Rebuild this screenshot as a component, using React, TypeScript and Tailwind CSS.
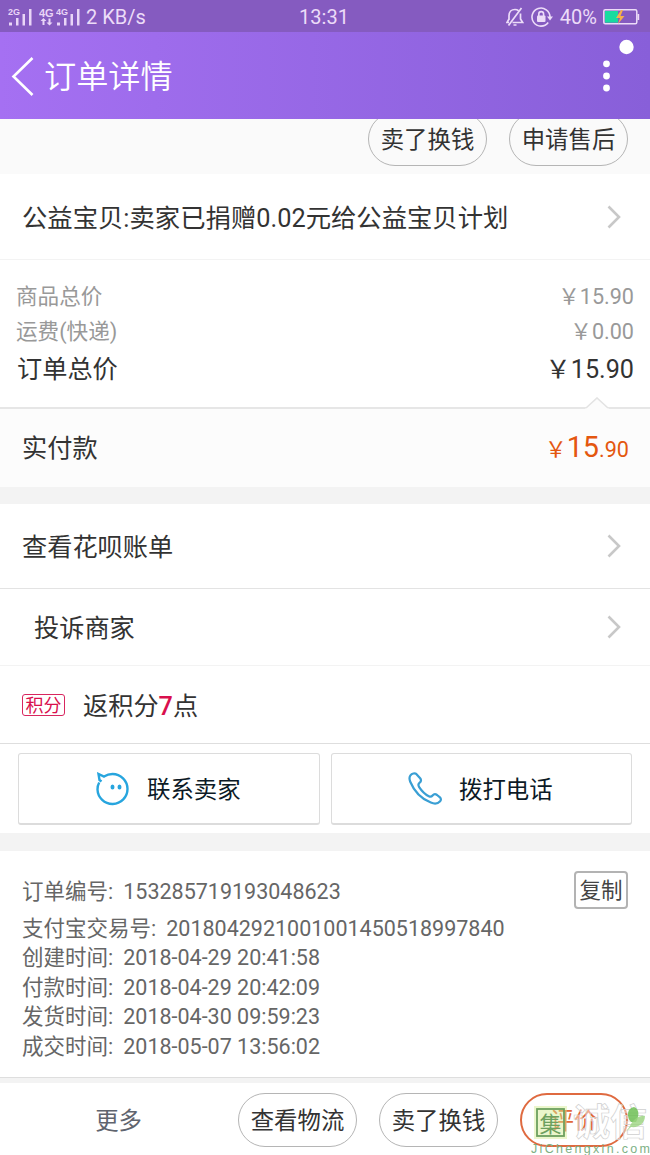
import type { ReactNode } from "react";

const totals = [
  { label: "商品总价", value: "￥15.90" },
  { label: "运费(快递)", value: "￥0.00" },
];

const times = [
  { label: "支付宝交易号:", value: "2018042921001001450518997840" },
  { label: "创建时间:", value: "2018-04-29 20:41:58" },
  { label: "付款时间:", value: "2018-04-29 20:42:09" },
  { label: "发货时间:", value: "2018-04-30 09:59:23" },
  { label: "成交时间:", value: "2018-05-07 13:56:02" },
];

function Signal({ label }: { label: string }) {
  return (
    <svg width="24" height="20" viewBox="0 0 24 20" fill="#e9d5f7">
      <text x="0" y="8" fontSize="9" fontWeight="700" fontFamily="Liberation Sans, sans-serif">
        {label}
      </text>
      <rect x="1" y="15.500" width="3" height="3" />
      <rect x="8" y="11" width="2.500" height="7.500" />
      <rect x="14.500" y="7" width="2.500" height="11.500" />
      <rect x="21" y="2" width="2.500" height="16.500" />
    </svg>
  );
}

function StatusBar() {
  return (
    <div className="grid h-8 grid-cols-[1fr_auto_1fr] items-center bg-[#855bc0] pl-2 pr-[10px] text-[20px] leading-8 text-[#ecdcf8]">
      <div className="flex items-center">
        <Signal label="2G" />
        <svg className="ml-[7px]" width="17" height="20" viewBox="0 0 17 20" fill="#e9d5f7">
          <text x="0" y="9.500" fontSize="11" fontWeight="700" fontFamily="Liberation Sans, sans-serif">
            4G
          </text>
          <path d="M4.500 11l3 3h-2v4h-2v-4h-2zM10.500 18.500l-3-3h2v-4h2v4h2z" />
        </svg>
        <Signal label="4G" />
        <span className="ml-[6px]">2 KB/s</span>
      </div>
      <span className="pt-px">13:31</span>
      <div className="flex items-center justify-end">
        <svg width="18" height="20" viewBox="0 0 18 20" fill="none" stroke="#ecdcf8" strokeWidth="1.7">
          <path d="M3 13V8.500C3 5 5.500 2.500 9 2.500c1.500 0 2.500.4 3.400 1.200M14.500 6.500V12l2.200 3.500H6.500M3 12l-2 3.500h2M15.500 1L2.500 18.500M7.500 18h3" />
        </svg>
        <svg className="ml-[7px]" width="22" height="20" viewBox="0 0 22 20" fill="none" stroke="#ecdcf8" strokeWidth="1.6">
          <path d="M17.200 15.500A9 9 0 1 1 19 10" />
          <path d="M16 9.500h6l-3 4z" fill="#ecdcf8" stroke="none" />
          <rect x="6" y="8.500" width="8.500" height="6.500" rx="1" fill="#ecdcf8" stroke="none" />
          <path d="M7.800 9V7a2.400 2.400 0 0 1 4.800 0v2" />
        </svg>
        <span className="ml-[7px]">40%</span>
        <svg className="ml-[6px]" width="37" height="18" viewBox="0 0 37 18">
          <rect x="0.800" y="1.800" width="33" height="14" rx="1.500" fill="none" stroke="#ecdcf8" strokeWidth="1.500" />
          <rect x="2" y="3" width="13" height="11.600" fill="#17dba0" />
          <path d="M34.500 6h1.700v6h-1.700" fill="#ecdcf8" />
          <path d="M18 2l-5 8h4l-2 6 6.500-8h-4l2.500-6z" fill="#f5b04c" />
        </svg>
      </div>
    </div>
  );
}

function Header() {
  return (
    <header className="flex h-[87px] items-center bg-gradient-to-r from-[#a570f2] to-[#885fd9] pl-[11px]">
      <svg width="24" height="40" viewBox="0 0 24 40" fill="none" stroke="#fff" strokeWidth="2.600">
        <path d="M21.500 2L2.500 20.500 21.500 39" />
      </svg>
      <h1 className="ml-[9px] pt-[3px] text-[32.2px] font-[350] leading-10 text-white">订单详情</h1>
      <svg className="ml-auto mr-[14px]" width="36" height="87" viewBox="0 0 36 87" fill="#fff">
        <circle cx="26.500" cy="15" r="7.200" />
        <circle cx="6.500" cy="31.800" r="3.400" />
        <circle cx="6.500" cy="44" r="3.400" />
        <circle cx="6.500" cy="56" r="3.400" />
      </svg>
    </header>
  );
}

function Chevron() {
  return (
    <svg width="14" height="24" viewBox="0 0 14 24" fill="none" stroke="#c8c8c8" strokeWidth="2.600">
      <path d="M1.500 1.500L12 12 1.500 22.500" />
    </svg>
  );
}

function Pill({ children }: { children: ReactNode }) {
  return (
    <button className="h-[54px] w-[119px] shrink-0 rounded-full border border-[#b5b5b5] pt-[3px] text-[23.4px] leading-[49px] text-[#333]">
      {children}
    </button>
  );
}

function Row({ children, className }: { children: ReactNode; className: string }) {
  return (
    <div className={`flex items-center justify-between pr-[29px] text-[#333] ${className}`}>
      <span className="pt-1">{children}</span>
      <Chevron />
    </div>
  );
}

export default function App() {
  return (
    <main className="flex h-[1155px] w-[650px] flex-col overflow-hidden bg-white font-['Roboto','Noto_Sans_CJK_SC',sans-serif]">
      <StatusBar />
      <Header />

      {/* scrolled partly under the header */}
      <div className="flex h-[55px] items-end justify-end gap-[22px] overflow-hidden bg-[#fafafa] pb-2 pr-[22px]">
        <Pill>卖了换钱</Pill>
        <Pill>申请售后</Pill>
      </div>

      <Row className="h-[86px] border-b border-[#f3f3f3] pl-[22px] text-[25.35px]">
        公益宝贝:卖家已捐赠0.02元给公益宝贝计划
      </Row>

      <section className="flex h-[147px] flex-col pl-4 pr-4 pt-5">
        {totals.map((item) => (
          <div key={item.label} className="flex h-[35px] items-center justify-between text-[21.6px] text-[#999]">
            <span>{item.label}</span>
            <span>{item.value}</span>
          </div>
        ))}
        <div className="flex h-[39px] items-center justify-between pl-px text-[25.2px] text-[#333]">
          <span>订单总价</span>
          <span>￥15.90</span>
        </div>
      </section>

      <section className="relative flex h-20 items-center justify-between border-t-2 border-[#e6e6e6] bg-[#fcfcfc] pl-[22px] pr-[21px] text-[25.2px] text-[#333]">
        <svg className="absolute -top-[12px] left-[585px]" width="24" height="14" viewBox="0 0 24 14">
          <path d="M0 12L12 1l12 11v2H0z" fill="#fcfcfc" />
          <path d="M1 11L12 1l11 10" fill="none" stroke="#e3e3e3" strokeWidth="1.600" />
        </svg>
        <span className="pt-px">实付款</span>
        <span className="text-[21.6px] text-[#e4570f]">
          ￥<span className="text-[28.8px]">15</span>.90
        </span>
      </section>

      <div className="h-[17px] bg-[#f3f3f3]" />

      <Row className="h-[85px] border-b border-[#e3e3e3] pl-[22px] text-[25.2px]">查看花呗账单</Row>
      <Row className="h-[77px] border-b border-[#f3f3f3] pl-[34px] text-[25.2px]">投诉商家</Row>

      <div className="flex h-[78px] items-center border-b border-[#dedede] pl-[22px] text-[25.2px] text-[#333]">
        <span className="flex h-[22px] w-[43px] items-center justify-center rounded-[3px] border border-[#d8265f] pt-px text-[18px] text-[#d90f4d]">
          积分
        </span>
        <span className="ml-[18px] pt-1">
          返积分<b className="font-medium text-[#d90f4d]">7</b>点
        </span>
      </div>

      <div className="flex h-[89px] gap-[11px] px-[18px] pt-[9px] text-[23.4px] text-[#0c1a26]">
        <button className="flex h-[72px] flex-1 items-center rounded-[3px] border border-b-2 border-[#dcdcdc] pl-[77px]">
          <svg width="34" height="34" viewBox="0 0 34 34" fill="none" stroke="#27a5de" strokeWidth="2.400">
            <path d="M3.200 10.500C1.800 13 1.500 15 1.500 17.500a15 15 0 1 0 15-15.500c-3.500 0-6 1-8.500 2.600L2.500 2l1 6 2 1.500" />
            <ellipse cx="16.500" cy="15" rx="2" ry="2.600" fill="#27a5de" stroke="none" />
            <ellipse cx="23.500" cy="15" rx="2" ry="2.600" fill="#27a5de" stroke="none" />
          </svg>
          <span className="ml-[17px] pt-[5px]">联系卖家</span>
        </button>
        <button className="flex h-[72px] flex-1 items-center rounded-[3px] border border-b-2 border-[#dcdcdc] pl-[76px]">
          <svg width="34" height="33" viewBox="0 0 35 34" fill="none" stroke="#3a9fd4" strokeWidth="2.300" strokeLinejoin="round">
            <path d="M2.500 3.500C4 1.500 7 .8 8.500 2l4 4.500c1.500 1.800.8 3.500-.5 4.500-1.500 1.200-1.600 2.800-.5 4.500 2.800 4.300 5.800 7.300 10 9.500 1.600.8 2.800.4 3.800-.8 1.300-1.500 3-1.700 4.600-.5l3 2.500c1.200 1 1.300 2.800.2 4C30.500 33 27 33 23.500 31.500 13.500 27.500 6 19 2.300 10 1.300 7.500 1.200 5.200 2.500 3.500z" />
          </svg>
          <span className="ml-[17px] pt-[5px]">拨打电话</span>
        </button>
      </div>

      <div className="h-[18px] bg-[#f3f3f3]" />

      <section className="flex h-[226px] flex-col pl-[22px] pr-[22px] pt-5 text-[21.5px] text-[#666]">
        <div className="mb-px flex h-[42px] items-center justify-between">
          <span className="flex gap-[10px]">
            <span>订单编号:</span>
            <span>153285719193048623</span>
          </span>
          <button className="mb-1 h-[38px] w-[54px] rounded-[4px] border-2 border-[#b3b3b3] pt-px leading-[34px] text-[#444]">
            复制
          </button>
        </div>
        {times.map((item) => (
          <div key={item.label} className="flex h-[29.500px] items-center gap-[10px]">
            <span>{item.label}</span>
            <span>{item.value}</span>
          </div>
        ))}
      </section>

      <footer className="relative flex h-[78px] items-center justify-end gap-[22px] border-t border-[#dedede] pr-[22px] pt-[7px] shadow-[inset_0_5px_0_#f3f3f3]">
        <span className="mr-[74px] pt-[3px] text-[23.4px] text-[#5f646e]">更多</span>
        <Pill>查看物流</Pill>
        <Pill>卖了换钱</Pill>
        <button className="h-[54px] w-[108px] rounded-full border-2 border-[#df6a40] pt-[3px] text-[23.4px] leading-[47px] text-[#e2683a]">
          评价
        </button>

        {/* site watermark lies over the buttons */}
        <svg className="absolute bottom-0 right-0" width="122" height="60" viewBox="0 -10 122 60">
          <rect x="6" y="1" width="33" height="33" fill="#d3ec8f" fillOpacity="0.450" />
          <rect x="9" y="4" width="27" height="27" fill="none" stroke="#6da05f" strokeWidth="1.800" />
          <text x="11.500" y="26.500" fontSize="22" fontFamily="Noto Sans CJK SC, sans-serif" fill="#6da05f">
            集
          </text>
          <text
            x="45"
            y="31"
            fontSize="37"
            fontWeight="700"
            fontFamily="Noto Sans CJK SC, sans-serif"
            fill="#fff"
            fillOpacity="0.450"
            stroke="#cfcfcf"
            strokeWidth="0.700"
          >
            诚信
          </text>
          <path d="M103 17c-5-5-4-14 3-15 6 2 5 10 2 15z" fill="#6fbf55" fillOpacity="0.850" />
          <path d="M92 29c5-1 8-4 11-10 4-7 11-9 14-8 0 7-6 12-14 11-4 4-7 6-11 7z" fill="#9bd47f" fillOpacity="0.800" />
          <text x="3" y="47.500" fontSize="12.500" textLength="119" fontFamily="Liberation Sans, sans-serif" fill="#7db184">
            JiChengxin.com
          </text>
        </svg>
      </footer>
    </main>
  );
}
